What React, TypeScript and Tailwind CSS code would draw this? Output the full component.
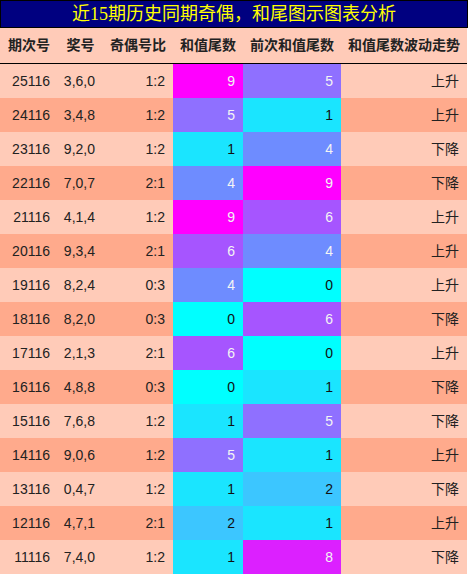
import React from 'react';

const rows: [string, string, string, number, number, string][] = [
  ['25116', '3,6,0', '1:2', 9, 5, '上升'],
  ['24116', '3,4,8', '1:2', 5, 1, '上升'],
  ['23116', '9,2,0', '1:2', 1, 4, '下降'],
  ['22116', '7,0,7', '2:1', 4, 9, '下降'],
  ['21116', '4,1,4', '1:2', 9, 6, '上升'],
  ['20116', '9,3,4', '2:1', 6, 4, '上升'],
  ['19116', '8,2,4', '0:3', 4, 0, '上升'],
  ['18116', '8,2,0', '0:3', 0, 6, '下降'],
  ['17116', '2,1,3', '2:1', 6, 0, '上升'],
  ['16116', '4,8,8', '0:3', 0, 1, '下降'],
  ['15116', '7,6,8', '1:2', 1, 5, '下降'],
  ['14116', '9,0,6', '1:2', 5, 1, '上升'],
  ['13116', '0,4,7', '1:2', 1, 2, '下降'],
  ['12116', '4,7,1', '2:1', 2, 1, '上升'],
  ['11116', '7,4,0', '1:2', 1, 8, '下降'],
];

// 尾数 -> 背景色 / 文字色
const tail: Record<number, string> = {
  0: 'bg-[#00ffff] text-[#111]',
  1: 'bg-[#1ae5ff] text-[#111]',
  2: 'bg-[#3cc6ff] text-[#111]',
  3: 'bg-[#56a8ff] text-[#f4f4f4]',
  4: 'bg-[#6e8cff] text-[#f4f4f4]',
  5: 'bg-[#8f70ff] text-[#f4f4f4]',
  6: 'bg-[#a655ff] text-[#f4f4f4]',
  7: 'bg-[#c03cff] text-[#f4f4f4]',
  8: 'bg-[#dc20ff] text-[#f4f4f4]',
  9: 'bg-[#ff00ff] text-[#f4f4f4]',
};

const cols = 'grid grid-cols-[58px_45px_70px_70px_98px_126px]';

export default function App() {
  return (
    <div
      className="w-[468px] h-[575px] bg-white"
      style={{ fontFamily: '"Liberation Sans", "Noto Sans CJK SC", sans-serif' }}
    >
      <div
        className="h-[28px] border border-black bg-[#000080] text-[#ffff00] text-[18px] flex items-center justify-center leading-none"
        style={{ fontFamily: '"Liberation Serif", "Noto Sans CJK SC", serif' }}
      >
        近15期历史同期奇偶，和尾图示图表分析
      </div>
      <div className="w-[467px]">
        <div className={`${cols} h-[36px] border-b border-black bg-[#ffcbb8] text-[14px] font-bold text-[#222] items-center text-center`}>
          <div>期次号</div>
          <div>奖号</div>
          <div>奇偶号比</div>
          <div>和值尾数</div>
          <div>前次和值尾数</div>
          <div>和值尾数波动走势</div>
        </div>
        {rows.map((r, i) => {
          const bg = i % 2 === 0 ? 'bg-[#ffcbb8]' : 'bg-[#ffaa8c]';
          return (
            <div key={r[0]} className={`${cols} h-[34px] text-[14px] text-[#222] text-right`}>
              <div className={`${bg} flex items-center justify-end pr-2`}>{r[0]}</div>
              <div className={`${bg} flex items-center justify-end pr-2`}>{r[1]}</div>
              <div className={`${bg} flex items-center justify-end pr-2`}>{r[2]}</div>
              <div className={`${tail[r[3]]} flex items-center justify-end pr-2`}>{r[3]}</div>
              <div className={`${tail[r[4]]} flex items-center justify-end pr-2`}>{r[4]}</div>
              <div className={`${bg} flex items-center justify-end pr-2`}>{r[5]}</div>
            </div>
          );
        })}
      </div>
    </div>
  );
}
